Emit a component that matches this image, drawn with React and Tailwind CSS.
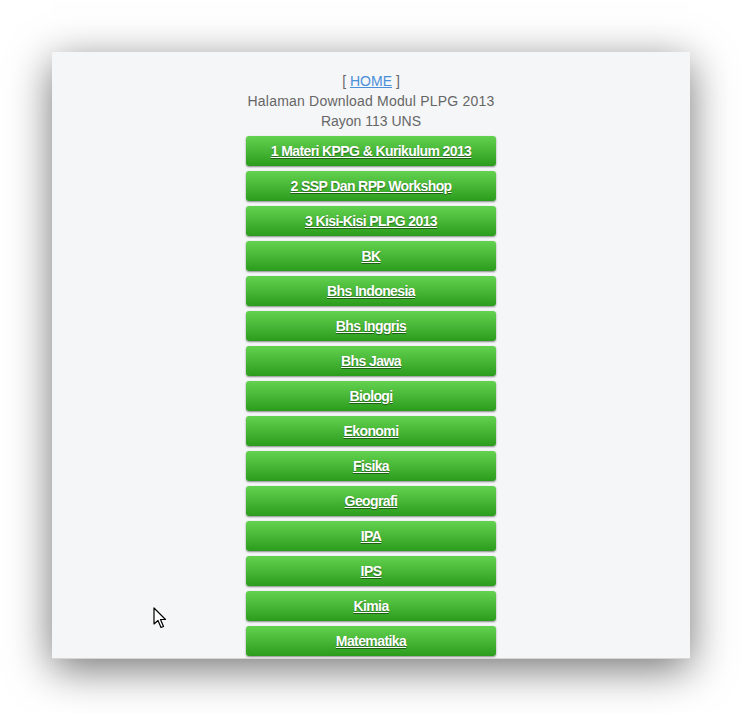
import React from "react";

const subjects = [
  "1 Materi KPPG & Kurikulum 2013",
  "2 SSP Dan RPP Workshop",
  "3 Kisi-Kisi PLPG 2013",
  "BK",
  "Bhs Indonesia",
  "Bhs Inggris",
  "Bhs Jawa",
  "Biologi",
  "Ekonomi",
  "Fisika",
  "Geografi",
  "IPA",
  "IPS",
  "Kimia",
  "Matematika",
];

function Cursor() {
  return (
    <svg className="absolute left-[153px] top-[607px]" width="14" height="22" viewBox="0 0 14 22">
      <path d="M1 1 L1 17 L5 13.5 L8 20.5 L10.5 19.5 L7.5 12.5 L12.5 12.5 Z" fill="#fff" stroke="#000" strokeWidth="1.2" strokeLinejoin="round" />
    </svg>
  );
}

export default function App() {
  return (
    <div className="relative h-[713px] w-[742px] overflow-hidden bg-white pl-[52px] pt-[52px]" style={{ fontFamily: '"Liberation Sans", Arial, sans-serif' }}>
      <div className="flex h-[607px] w-[638px] flex-col items-center overflow-hidden border-b border-[#d6d6d6] bg-[#f5f6f8] pt-[19px] shadow-[0_10px_40px_rgba(0,0,0,0.55)]">
        <p className="text-[14px] leading-5 text-[#666]">
          [ <a href="#" className="text-[#4a8fd8] underline">HOME</a> ]
        </p>
        <p className="text-[14px] leading-5 tracking-[0.2px] text-[#666]">Halaman Download Modul PLPG 2013</p>
        <p className="text-[14px] leading-5 text-[#666]">Rayon 113 UNS</p>
        <div className="mt-[5px] flex flex-col gap-[5px]">
          {subjects.map((name) => (
            <a
              key={name}
              href="#"
              className="flex h-[30px] w-[250px] items-center justify-center rounded-[3px] bg-gradient-to-b from-[#63d24f] to-[#2a9c1b] text-[14px] font-bold tracking-[-0.6px] text-white underline shadow-[0_1px_2px_rgba(0,0,0,0.45)] [text-shadow:0_1px_1px_rgba(0,0,0,0.45)]"
            >
              {name}
            </a>
          ))}
        </div>
      </div>
      <Cursor />
    </div>
  );
}
